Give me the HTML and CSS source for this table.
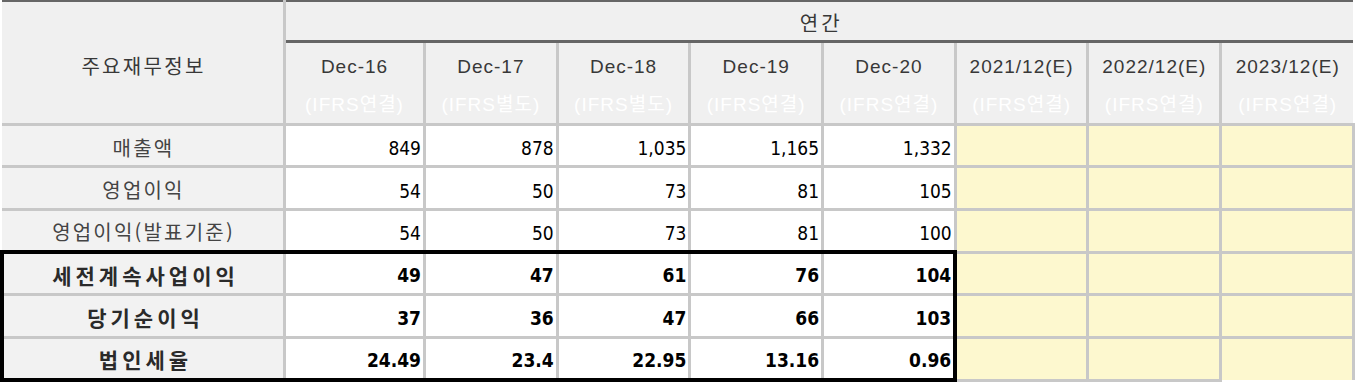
FILE: index.html
```html
<!DOCTYPE html>
<html lang="ko">
<head>
<meta charset="utf-8">
<title>주요재무정보</title>
<link rel="stylesheet" href="styles.css">
</head>
<body>
<table class="fin">
  <colgroup>
    <col class="c-label">
    <col class="c-first">
    <col class="c-data" span="7">
  </colgroup>
  <thead>
    <tr class="h1">
      <th class="title" rowspan="2">주요재무정보</th>
      <th class="annual" colspan="8">연간</th>
    </tr>
    <tr class="h2">
      <th><span class="p-date">Dec-16</span><span class="p-basis">(IFRS연결)</span></th>
      <th><span class="p-date">Dec-17</span><span class="p-basis">(IFRS별도)</span></th>
      <th><span class="p-date">Dec-18</span><span class="p-basis">(IFRS별도)</span></th>
      <th><span class="p-date">Dec-19</span><span class="p-basis">(IFRS연결)</span></th>
      <th><span class="p-date">Dec-20</span><span class="p-basis">(IFRS연결)</span></th>
      <th><span class="p-date">2021/12(E)</span><span class="p-basis">(IFRS연결)</span></th>
      <th><span class="p-date">2022/12(E)</span><span class="p-basis">(IFRS연결)</span></th>
      <th class="last"><span class="p-date">2023/12(E)</span><span class="p-basis">(IFRS연결)</span></th>
    </tr>
  </thead>
  <tbody>
    <tr class="row">
      <th class="label">매출액</th>
      <td class="num">849</td><td class="num">878</td><td class="num">1,035</td><td class="num">1,165</td><td class="num">1,332</td>
      <td class="est"></td><td class="est"></td><td class="est"></td>
    </tr>
    <tr class="row">
      <th class="label">영업이익</th>
      <td class="num">54</td><td class="num">50</td><td class="num">73</td><td class="num">81</td><td class="num">105</td>
      <td class="est"></td><td class="est"></td><td class="est"></td>
    </tr>
    <tr class="row">
      <th class="label">영업이익(발표기준)</th>
      <td class="num">54</td><td class="num">50</td><td class="num">73</td><td class="num">81</td><td class="num">100</td>
      <td class="est"></td><td class="est"></td><td class="est"></td>
    </tr>
    <tr class="row box box-top">
      <th class="label">세전계속사업이익</th>
      <td class="num">49</td><td class="num">47</td><td class="num">61</td><td class="num">76</td><td class="num edge">104</td>
      <td class="est"></td><td class="est"></td><td class="est"></td>
    </tr>
    <tr class="row box">
      <th class="label">당기순이익</th>
      <td class="num">37</td><td class="num">36</td><td class="num">47</td><td class="num">66</td><td class="num edge">103</td>
      <td class="est"></td><td class="est"></td><td class="est"></td>
    </tr>
    <tr class="row box box-bottom">
      <th class="label">법인세율</th>
      <td class="num">24.49</td><td class="num">23.4</td><td class="num">22.95</td><td class="num">13.16</td><td class="num edge">0.96</td>
      <td class="est"></td><td class="est"></td><td class="est open"></td>
    </tr>
  </tbody>
</table>
</body>
</html>
```

FILE: styles.css
```css
html, body {
  margin: 0;
  padding: 0;
  background: #ffffff;
}

.fin {
  border-collapse: collapse;
  table-layout: fixed;
  width: 1351.5px;
}

.c-label { width: 282.5px; }
.c-first { width: 140px; }
.c-data { width: 132.7px; }

.fin th,
.fin td {
  border: 3px solid #c8c8c8;
  padding: 0;
}

/* header */
.fin thead th {
  background: #f0f0f0;
  font-weight: normal;
  color: #383838;
  text-align: center;
  vertical-align: middle;
}

.h1 th {
  border-top: 2px solid #666666;
}

.fin thead .title {
  border-left: none;
  font-family: "Noto Sans CJK KR", sans-serif;
  font-size: 20px;
  letter-spacing: 2.3px;
  padding-left: 2px;
  padding-top: 6px;
}

.fin thead .annual {
  height: 35px;
  border-right: none;
  border-bottom: 3px solid #666666;
  font-family: "Noto Sans CJK KR", sans-serif;
  font-size: 20px;
  letter-spacing: 3px;
  padding-left: 3px;
  padding-top: 3px;
}

.fin thead .h2 th {
  border-top: 3px solid #666666;
  height: 76px;
  padding-top: 4px;
}

.h2 th.last {
  border-right: none;
}

.p-date,
.p-basis {
  display: block;
  font-family: "Liberation Sans", "Noto Sans CJK KR", sans-serif;
  font-size: 19px;
  letter-spacing: 1px;
}

.p-date {
  line-height: 40px;
}

.p-basis {
  line-height: 36px;
  color: #ffffff;
}

/* body */
.fin .est {
  height: 39.35px;
  background: #fdf8cf;
}

.fin .label {
  height: 36.35px;
  padding-top: 3px;
  border-left: none;
  background: #f2f2f2;
  font-family: "Noto Sans CJK KR", sans-serif;
  font-weight: normal;
  font-size: 20px;
  letter-spacing: 2.2px;
  padding-left: 2px;
  color: #444444;
  text-align: center;
}

.fin .num {
  height: 34.35px;
  padding-top: 5px;
  background: #ffffff;
  text-align: right;
  padding-right: 2px;
  font-family: "DejaVu Sans Condensed", "DejaVu Sans", sans-serif;
  font-stretch: condensed;
  font-size: 19px;
  color: #000000;
}

.fin .est.open {
  border-bottom: none;
}

/* boxed block */
.fin .box .label {
  height: 37.35px;
  padding-top: 2px;
  border-left: 4px solid #000000;
  font-weight: bold;
  font-size: 21px;
  letter-spacing: 4px;
  padding-left: 4px;
  color: #2a2a2a;
}

.fin .box .num {
  height: 36.35px;
  padding-top: 3px;
  font-weight: bold;
}

.fin .box .edge {
  border-right: 4px solid #000000;
}

.fin .box-top .label,
.fin .box-top .num {
  border-top: 4px solid #000000;
}

.fin .box-bottom .label,
.fin .box-bottom .num {
  border-bottom: 4px solid #000000;
}
```
